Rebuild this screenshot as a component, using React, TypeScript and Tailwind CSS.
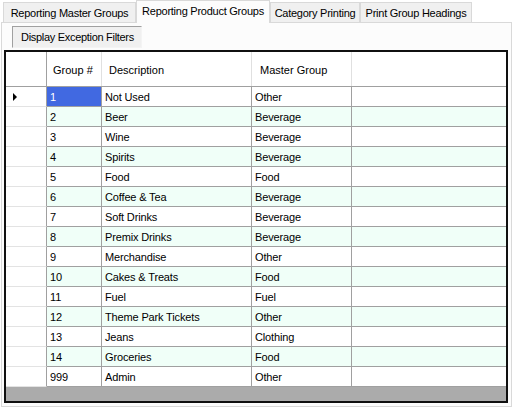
const rows = [
  { id: '1', desc: 'Not Used', master: 'Other' },
  { id: '2', desc: 'Beer', master: 'Beverage' },
  { id: '3', desc: 'Wine', master: 'Beverage' },
  { id: '4', desc: 'Spirits', master: 'Beverage' },
  { id: '5', desc: 'Food', master: 'Food' },
  { id: '6', desc: 'Coffee & Tea', master: 'Beverage' },
  { id: '7', desc: 'Soft Drinks', master: 'Beverage' },
  { id: '8', desc: 'Premix Drinks', master: 'Beverage' },
  { id: '9', desc: 'Merchandise', master: 'Other' },
  { id: '10', desc: 'Cakes & Treats', master: 'Food' },
  { id: '11', desc: 'Fuel', master: 'Fuel' },
  { id: '12', desc: 'Theme Park Tickets', master: 'Other' },
  { id: '13', desc: 'Jeans', master: 'Clothing' },
  { id: '14', desc: 'Groceries', master: 'Food' },
  { id: '999', desc: 'Admin', master: 'Other' },
];

const tabs = [
  { label: 'Reporting Master Groups', w: 'w-[133px] ml-[3px]' },
  { label: 'Reporting Product Groups', w: 'w-[134px]', active: true },
  { label: 'Category Printing', w: 'w-[90px]' },
  { label: 'Print Group Headings', w: 'w-[112px]' },
];

export default function App() {
  return (
    <div className="w-[514px] h-[408px] bg-white text-[11px] text-black overflow-hidden font-['Liberation_Sans',Arial,sans-serif]">
      {/* tab strip */}
      <div className="flex items-end h-[22px]">
        {tabs.map((t) =>
          t.active ? (
            <div
              key={t.label}
              className={`${t.w} relative z-10 h-[23px] -mb-px flex justify-center items-center pb-[2px] bg-[#fcfcfc] border border-b-0 border-[#d9d9d9] tracking-[-0.25px] whitespace-nowrap`}
            >
              {t.label}
            </div>
          ) : (
            <div
              key={t.label}
              className={`${t.w} h-[20px] flex justify-center items-center pt-[2px] bg-[#f0f0f0] border border-b-0 border-[#d9d9d9] tracking-[-0.25px] whitespace-nowrap`}
            >
              {t.label}
            </div>
          )
        )}
      </div>

      {/* tab page */}
      <div className="ml-[1px] w-[511px] h-[385px] border border-[#d9d9d9] bg-[#fcfcfc]">
        <div className="ml-[10px] mt-[3px] mb-[2px] w-[130px] h-[22px] flex items-center pl-[8px] bg-[#f0f0f0] border border-t-[#a0a0a0] border-l-[#a0a0a0] border-r-[#f4f4f4] border-b-[#f4f4f4] tracking-[-0.3px] whitespace-nowrap">
          Display Exception Filters
        </div>

        {/* grid */}
        <div className="ml-[2px] w-[504px] h-[353px] border-2 border-[#101010] bg-[#ababab] flex flex-col">
          <div className="flex h-[35px] bg-white border-b border-[#a0a0a0]">
            <div className="w-[41px] border-r border-[#a0a0a0]" />
            <div className="w-[55px] flex items-center pl-[6px] pt-[3px] border-r border-[#e0e0e0]">Group #</div>
            <div className="w-[150px] flex items-center pl-[7px] pt-[3px] border-r border-[#e0e0e0]">Description</div>
            <div className="w-[100px] flex items-center pl-[8px] pt-[3px] border-r border-[#e0e0e0]">Master Group</div>
            <div className="flex-1" />
          </div>

          {rows.map((r, i) => {
            const bg = i % 2 === 1 ? 'bg-[#f0fff8]' : 'bg-white';
            return (
              <div key={r.id} className="flex h-[20px] tracking-[-0.15px]">
                <div className="w-[41px] relative bg-white border-r border-r-[#a0a0a0] border-b border-b-[#e3e3e3]">
                  {i === 0 && (
                    <svg className="absolute left-[7px] top-[6px]" width="4" height="8" viewBox="0 0 4 8">
                      <path d="M0 0 L4 4 L0 8 Z" fill="#000" />
                    </svg>
                  )}
                </div>
                <div
                  className={`w-[55px] flex items-center pl-[3px] pt-px border-r border-b border-[#a0a0a0] ${
                    i === 0 ? 'bg-[#4169e1] text-white' : bg
                  }`}
                >
                  {r.id}
                </div>
                <div className={`w-[150px] flex items-center pl-[3px] pt-px border-r border-b border-[#a0a0a0] whitespace-nowrap ${bg}`}>
                  {r.desc}
                </div>
                <div className={`w-[100px] flex items-center pl-[3px] pt-px border-r border-b border-[#a0a0a0] ${bg}`}>
                  {r.master}
                </div>
                <div className={`flex-1 border-b border-[#a0a0a0] ${bg}`} />
              </div>
            );
          })}
        </div>
      </div>
    </div>
  );
}
